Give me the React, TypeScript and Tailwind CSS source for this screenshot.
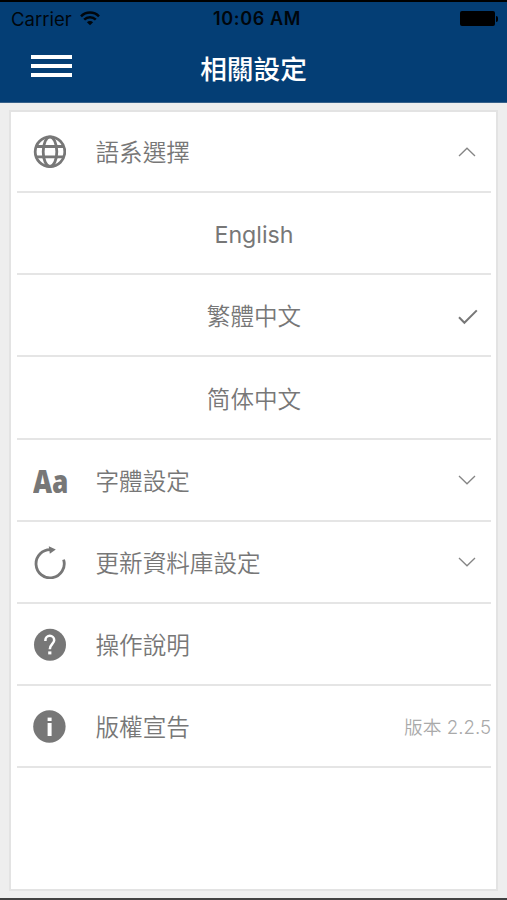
import type { ReactNode } from "react";

const LATIN_CJK = "font-['Inter','Noto_Sans_CJK_TC',sans-serif]";

function WifiIcon() {
  return (
    <svg width="20" height="15" viewBox="0 0 20 15" fill="none" stroke="#00060c" strokeWidth="2.5">
      <path d="M1 5.3a12.6 12.6 0 0 1 18 0" />
      <path d="M4.2 8.6a8.1 8.1 0 0 1 11.6 0" />
      <path d="M10 14.3 6.9 11.3a4.3 4.3 0 0 1 6.2 0z" fill="#00060c" stroke="none" />
    </svg>
  );
}

function GlobeIcon() {
  return (
    <svg width="33" height="33" viewBox="0 0 33 33" fill="none" stroke="#777" strokeWidth="2.8">
      <circle cx="17" cy="16.7" r="14.8" />
      <ellipse cx="17" cy="16.7" rx="6.8" ry="14.8" />
      <path d="M3.6 11.5h26.8M3.6 21.9h26.8" />
    </svg>
  );
}

function RefreshIcon() {
  return (
    <svg width="33" height="33" viewBox="0 0 33 33" fill="none" stroke="#777" strokeWidth="2.8">
      <path d="M30.6 13.6A14.1 14.1 0 1 1 18 3.7" />
      <path d="M15.8 0.3 22.8 3.6 16.8 7.8z" fill="#777" stroke="none" />
    </svg>
  );
}

function HelpIcon() {
  return (
    <svg width="33" height="33" viewBox="0 0 33 33" fill="none">
      <circle cx="17" cy="16.8" r="16" fill="#777" />
      <path d="M12.4 13v-.8a4.4 4.4 0 0 1 8.8 0c0 3.4-4.4 4.2-4.4 9" stroke="#fff" strokeWidth="2.5" />
      <rect x="15.2" y="23.4" width="3.2" height="3" fill="#fff" />
    </svg>
  );
}

function InfoIcon() {
  return (
    <svg width="33" height="33" viewBox="0 0 33 33">
      <circle cx="16.4" cy="16.5" r="16.2" fill="#777" />
      <rect x="14.6" y="7.6" width="4" height="3.4" fill="#fff" />
      <rect x="14.6" y="13" width="4" height="13" fill="#fff" />
    </svg>
  );
}

function Chevron({ up = false }: { up?: boolean }) {
  return (
    <svg className="mt-px mr-[15px]" width="18" height="10" viewBox="0 0 18 10" fill="none" stroke="#858585" strokeWidth="1.3">
      <path d={up ? "M1 9 9 1.2 17 9" : "M1 1 9 8.8 17 1"} />
    </svg>
  );
}

function Row({ icon, label, end }: { icon: ReactNode; label: string; end?: ReactNode }) {
  return (
    <div className="flex h-[82.15px] items-center border-b-2 border-[#e5e5e5]">
      <div className="ml-4 flex w-[62.5px] shrink-0 items-center pt-px">{icon}</div>
      <span className="flex-1 pt-1 text-[23.6px] leading-8">{label}</span>
      {end}
    </div>
  );
}

function Option({ label, style = "pt-1 text-[23.6px] leading-8", selected = false }: { label: string; style?: string; selected?: boolean }) {
  return (
    <div className="grid h-[82.15px] grid-cols-[1fr_auto_1fr] items-center border-b-2 border-[#e5e5e5]">
      <span />
      <span className={style}>{label}</span>
      {selected && (
        <svg className="mt-[3px] mr-[13px] justify-self-end" width="20" height="16" viewBox="0 0 20 16" fill="none" stroke="#777" strokeWidth="2">
          <path d="M1 8.3 6.4 13.8 18.8 1.4" />
        </svg>
      )}
    </div>
  );
}

export default function App() {
  return (
    <div className={`flex h-[900px] w-[507px] flex-col overflow-hidden border-b-2 border-[#414141] bg-[#eee] font-[350] text-[#777] ${LATIN_CJK}`}>
      <header className="flex h-[103px] shrink-0 flex-col border-t-2 border-b border-t-black border-b-[#37618a] bg-[#043e75]">
        <div className="grid h-8 grid-cols-[1fr_auto_1fr] items-center text-[#00060c]">
          <div className="flex items-center gap-2 pl-[11px]">
            <span className="text-[18.5px] leading-8 font-normal">Carrier</span>
            <WifiIcon />
          </div>
          <span className="pt-px pl-[7px] text-[18px] leading-8 font-semibold tracking-[0.65px] whitespace-nowrap">10:06 AM</span>
          <div className="flex items-center justify-end gap-px pr-[9px]">
            <span className="h-[15px] w-[35px] rounded-[2px] bg-black" />
            <span className="h-1.5 w-0.5 rounded-r-full bg-black" />
          </div>
        </div>
        <div className="grid flex-1 grid-cols-[1fr_auto_1fr] items-center pt-px">
          <div className="ml-[31px] flex w-[41px] flex-col gap-[5px] pb-1.5">
            <span className="h-1 bg-white" />
            <span className="h-1 bg-white" />
            <span className="h-1 bg-white" />
          </div>
          <h1 className="text-[26.7px] leading-9 font-medium text-white">相關設定</h1>
        </div>
      </header>
      <main className="mx-[9px] mt-[7px] mb-[7px] flex-1 border-2 border-[#e3e3e3] bg-white pr-[5px] pl-1.5">
        <div className="-mt-px">
          <Row icon={<GlobeIcon />} label="語系選擇" end={<Chevron up />} />
          <Option label="English" style="pt-[3px] text-[23.2px] leading-8 font-normal" />
          <Option label="繁體中文" selected />
          <Option label="简体中文" style="pt-0.5 font-['Noto_Sans_CJK_SC',sans-serif] text-[23.6px] leading-8" />
          <Row
            icon={<span className="origin-left scale-x-[0.81] pt-px font-['Open_Sans',sans-serif] text-[32.5px] leading-9 font-extrabold">Aa</span>}
            label="字體設定"
            end={<Chevron />}
          />
          <Row icon={<RefreshIcon />} label="更新資料庫設定" end={<Chevron />} />
          <Row icon={<HelpIcon />} label="操作說明" />
          <Row icon={<InfoIcon />} label="版權宣告" end={<span className="pt-1 text-[18.7px] leading-7 text-[#aaa]">版本 2.2.5</span>} />
        </div>
      </main>
    </div>
  );
}
